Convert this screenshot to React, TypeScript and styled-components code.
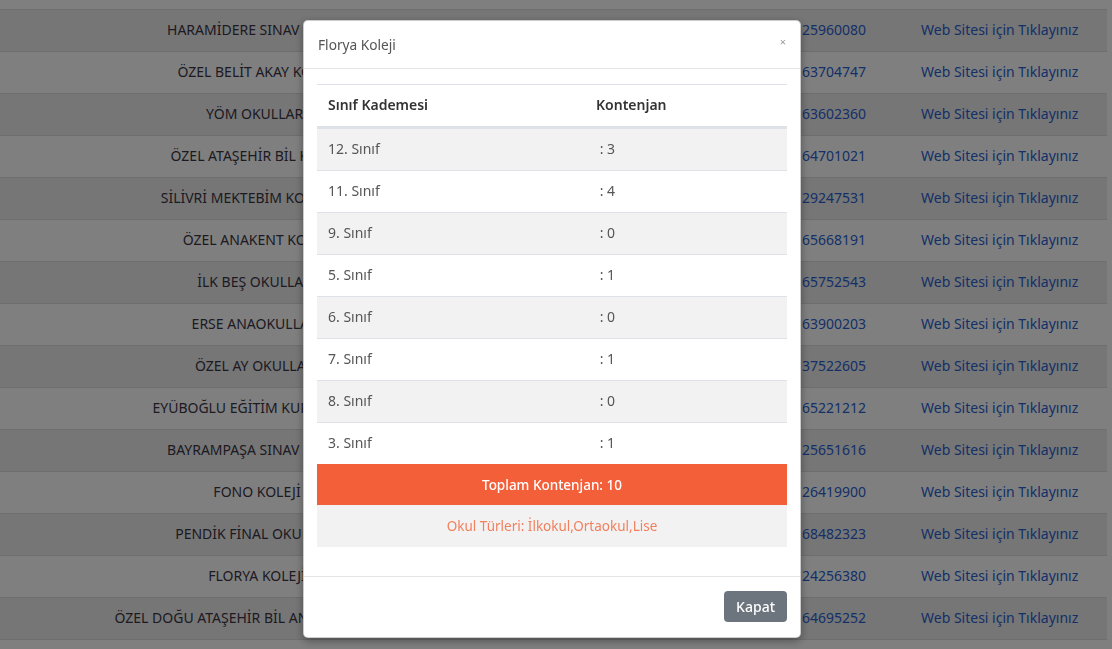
import React from "react";
import styled, { createGlobalStyle } from "styled-components";

const GlobalStyle = createGlobalStyle`
  html, body { margin: 0; padding: 0; background: #ffffff; overflow: hidden; }
  body { font-family: "Noto Sans", "Open Sans", Arial, sans-serif; }
  * { box-sizing: border-box; }
`;

const FONT = `"Noto Sans", "Open Sans", Arial, sans-serif`;

const Page = styled.div`
  width: 1112px;
  height: 649px;
  overflow: hidden;
`;

const SchoolList = styled.div`
  width: 1107px;
  margin-top: -33px;
  display: flex;
  flex-direction: column;
`;

const SchoolRow = styled.div<{ $striped: boolean }>`
  display: grid;
  grid-template-columns: 514px 252px 143px 1fr;
  height: 42px;
  align-items: center;
  border-top: 1px solid #dcdcdc;
  background: ${(p) => (p.$striped ? "#ececec" : "transparent")};
  font-family: ${FONT};
  font-size: 14px;
  line-height: 1;
  padding-bottom: 1px;
`;

const NameCell = styled.div`
  text-align: center;
  color: #3a3545;
  white-space: nowrap;
  padding: 0 12px;
`;

const EmptyCell = styled.div``;

const LinkCell = styled.a`
  color: #2a5fd0;
  text-decoration: none;
  padding: 0 12px;
  white-space: nowrap;
`;

const Backdrop = styled.div`
  position: fixed;
  inset: 0;
  background: rgba(0, 0, 0, 0.5);
  display: flex;
  justify-content: center;
  align-items: flex-start;
  padding: 20px 8px 0 0;
`;

const Dialog = styled.div`
  width: 498px;
  background: #fff;
  border: 1px solid rgba(0, 0, 0, 0.2);
  border-radius: 5px;
  box-shadow: 0 3px 9px rgba(0, 0, 0, 0.35);
  display: flex;
  flex-direction: column;
  font-family: ${FONT};
`;

const Header = styled.div`
  height: 48px;
  padding: 0 14px;
  display: flex;
  align-items: center;
  justify-content: space-between;
  border-bottom: 1px solid #e5e5e5;
`;

const Title = styled.h4`
  margin: 0 0 1px;
  font-size: 13.7px;
  font-weight: 400;
  color: #555;
`;

const Close = styled.button`
  border: 0;
  background: none;
  padding: 0;
  margin-top: -6px;
  font-size: 11px;
  line-height: 1;
  color: #999;
  cursor: pointer;
  font-family: ${FONT};
`;

const Body = styled.div`
  padding: 15px 13px 29px;
`;

const Grid = styled.div`
  display: flex;
  flex-direction: column;
  border-top: 1px solid #dee2e6;
`;

const HeadRow = styled.div`
  display: grid;
  grid-template-columns: 268px 1fr;
  height: 43px;
  align-items: center;
  border-bottom: 2px solid #dee2e6;
  font-size: 14px;
  font-weight: 600;
  color: #333;
  padding-bottom: 2px;
`;

const Row = styled.div<{ $striped: boolean }>`
  display: grid;
  grid-template-columns: 268px 1fr;
  height: 42px;
  align-items: center;
  border-top: 1px solid #dee2e6;
  background: ${(p) => (p.$striped ? "#f2f2f2" : "#fff")};
  font-size: 14px;
  color: #555;
  padding-bottom: 2px;
`;

const Cell = styled.div`
  padding: 0 11px;
  white-space: pre;
`;

const TotalRow = styled.div`
  height: 41px;
  display: flex;
  align-items: center;
  justify-content: center;
  background: #f25f38;
  color: #fff;
  font-size: 13.5px;
  font-weight: 500;
`;

const TypesRow = styled.div`
  height: 42px;
  display: flex;
  align-items: center;
  justify-content: center;
  background: #f2f2f2;
  color: #f2805e;
  font-size: 13.5px;
`;

const Footer = styled.div`
  border-top: 1px solid #e5e5e5;
  padding: 14px 13px 15px;
  display: flex;
  justify-content: flex-end;
`;

const Button = styled.button`
  height: 31px;
  padding: 0 12px;
  border: 0;
  border-radius: 4px;
  background: #6c757d;
  color: #fff;
  font-family: ${FONT};
  font-size: 14px;
  font-weight: 500;
  cursor: pointer;
`;

const schools: [string, string][] = [
  ["ÖZEL KARTAL BİLİM KOLEJİ", "02163540021"],
  ["HARAMİDERE SINAV KOLEJİ", "02125960080"],
  ["ÖZEL BELİT AKAY KOLEJİ", "02163704747"],
  ["YÖM OKULLARI", "02163602360"],
  ["ÖZEL ATAŞEHİR BİL KOLEJİ", "02164701021"],
  ["SİLİVRİ MEKTEBİM KOLEJLERİ", "02129247531"],
  ["ÖZEL ANAKENT KOLEJİ", "02165668191"],
  ["İLK BEŞ OKULLARI", "02165752543"],
  ["ERSE ANAOKULLARI", "02163900203"],
  ["ÖZEL AY OKULLARI", "02137522605"],
  ["EYÜBOĞLU EĞİTİM KURUMLARI", "02165221212"],
  ["BAYRAMPAŞA SINAV KOLEJİ", "02125651616"],
  ["FONO KOLEJİ", "02126419900"],
  ["PENDİK FİNAL OKULLARI", "02168482323"],
  ["FLORYA KOLEJİ", "02124256380"],
  ["ÖZEL DOĞU ATAŞEHİR BİL ANADOLU LİSESİ", "02164695252"],
  ["ÖZEL MALTEPE KOLEJİ", "02163337788"],
];

const quotas: [string, string][] = [
  ["12. Sınıf", " : 3"],
  ["11. Sınıf", " : 4"],
  ["9. Sınıf", " : 0"],
  ["5. Sınıf", " : 1"],
  ["6. Sınıf", " : 0"],
  ["7. Sınıf", " : 1"],
  ["8. Sınıf", " : 0"],
  ["3. Sınıf", " : 1"],
];

export default function App() {
  return (
    <Page>
      <GlobalStyle />
      <SchoolList>
        {schools.map(([name, phone], i) => (
          <SchoolRow key={name} $striped={i % 2 === 1}>
            <NameCell>{name}</NameCell>
            <EmptyCell />
            <LinkCell href="#">{phone}</LinkCell>
            <LinkCell href="#">Web Sitesi için Tıklayınız</LinkCell>
          </SchoolRow>
        ))}
      </SchoolList>
      <Backdrop>
        <Dialog>
          <Header>
            <Title>Florya Koleji</Title>
            <Close aria-label="Kapat">×</Close>
          </Header>
          <Body>
            <Grid>
              <HeadRow>
                <Cell>Sınıf Kademesi</Cell>
                <Cell>Kontenjan</Cell>
              </HeadRow>
              {quotas.map(([grade, count], i) => (
                <Row key={grade} $striped={i % 2 === 0}>
                  <Cell>{grade}</Cell>
                  <Cell>{count}</Cell>
                </Row>
              ))}
              <TotalRow>Toplam Kontenjan: 10</TotalRow>
              <TypesRow>Okul Türleri: İlkokul,Ortaokul,Lise</TypesRow>
            </Grid>
          </Body>
          <Footer>
            <Button>Kapat</Button>
          </Footer>
        </Dialog>
      </Backdrop>
    </Page>
  );
}
